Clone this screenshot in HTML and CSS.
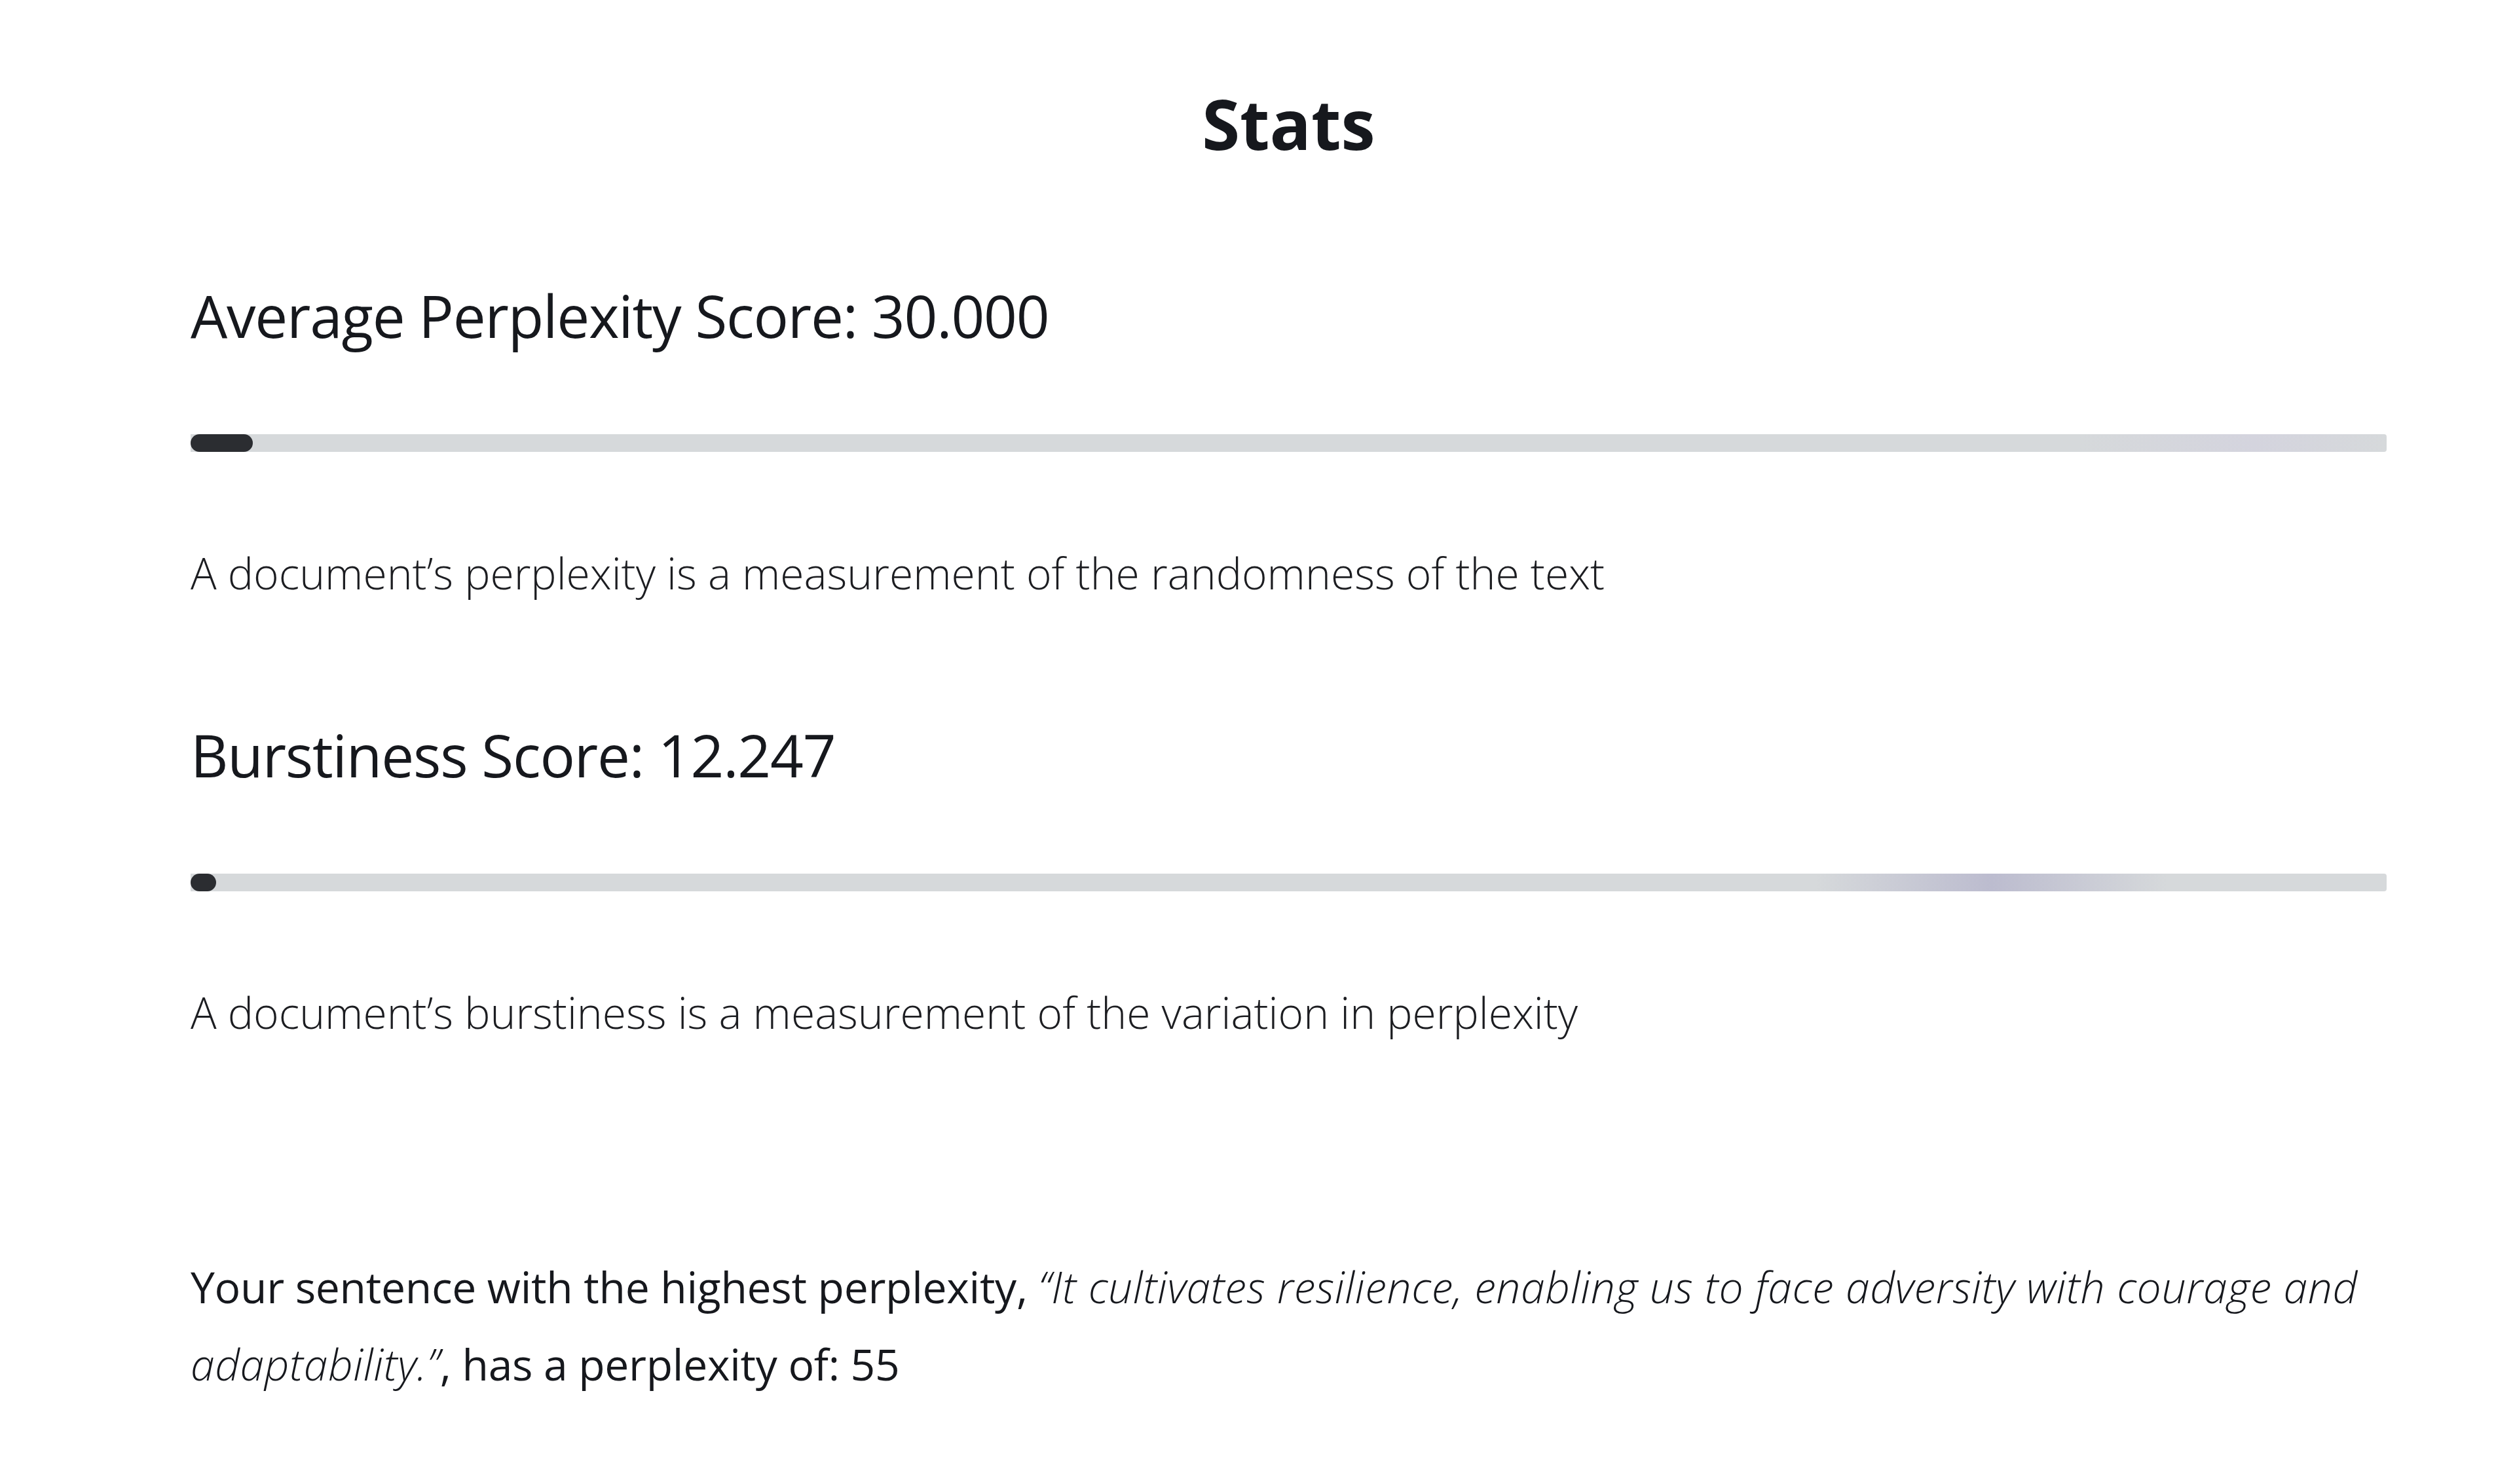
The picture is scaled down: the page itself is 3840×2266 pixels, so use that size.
FILE: index.html
```html
<!DOCTYPE html>
<html lang="en">
<head>
    <meta charset="UTF-8">
    <meta name="viewport" content="width=device-width, initial-scale=1.0">
    <title>Stats</title>
    <link rel="stylesheet" href="styles.css">
</head>
<body>

<div class="stats">
    <h1 class="stats-title">Stats</h1>

    <div class="stat">
        <h2 class="stat-title">Average Perplexity Score: 30.000</h2>
        <div class="bar bar-perplexity">
            <div class="bar-fill" style="width: 2.83%;"></div>
        </div>
        <p class="stat-desc">A document’s perplexity is a measurement of the randomness of the text</p>
    </div>

    <div class="stat">
        <h2 class="stat-title">Burstiness Score: 12.247</h2>
        <div class="bar bar-burst">
            <div class="bar-fill" style="width: 1.16%;"></div>
        </div>
        <p class="stat-desc">A document’s burstiness is a measurement of the variation in perplexity</p>
    </div>

    <p class="highest">Your sentence with the highest perplexity, <i class="quote">“It cultivates resilience, enabling us to face adversity with courage and adaptability.”</i>, has a perplexity of: 55</p>
</div>

</body>
</html>
```

FILE: styles.css
```css
body {
    margin: 0;
    background-color: #fff;
    font-family: "Open Sans", "Noto Sans", sans-serif;
    color: #16181d;
}
.stats {
    padding: 126px 196px 0 291px;
}
.stats-title {
    margin: 0 0 176px;
    text-align: center;
    font-size: 105px;
    line-height: 1.2;
    font-weight: 700;
}
.stat {
    margin-bottom: 175px;
}
.stat-title {
    margin: 0 0 127px;
    font-size: 89px;
    line-height: 108px;
    font-weight: 400;
    letter-spacing: -1.2px;
}
.bar {
    height: 27px;
    background-color: #d6d9db;
    border-radius: 0 4px 4px 0;
    margin-bottom: 135px;
}
.bar-perplexity {
    background: linear-gradient(to right, #d6d9db 0%, #d6d9db 86%, #d4d4de 94%, #d6d9db 100%);
}
.bar-burst {
    background: linear-gradient(to right, #d6d9db 0%, #d6d9db 74%, #bcbccf 82%, #d6d9db 90%, #d6d9db 100%);
}
.bar-fill {
    height: 100%;
    background-color: #2b2d31;
    border-radius: 14px;
}
.stat-desc {
    margin: 0;
    font-size: 66px;
    line-height: 1.5;
    font-weight: 300;
    color: #1c1d21;
}
.stat + .stat {
    margin-bottom: 310px;
}
.highest {
    margin: 0;
    font-size: 66px;
    line-height: 118px;
    letter-spacing: -0.3px;
}
.quote {
    font-weight: 300;
    letter-spacing: 0.6px;
}
```
